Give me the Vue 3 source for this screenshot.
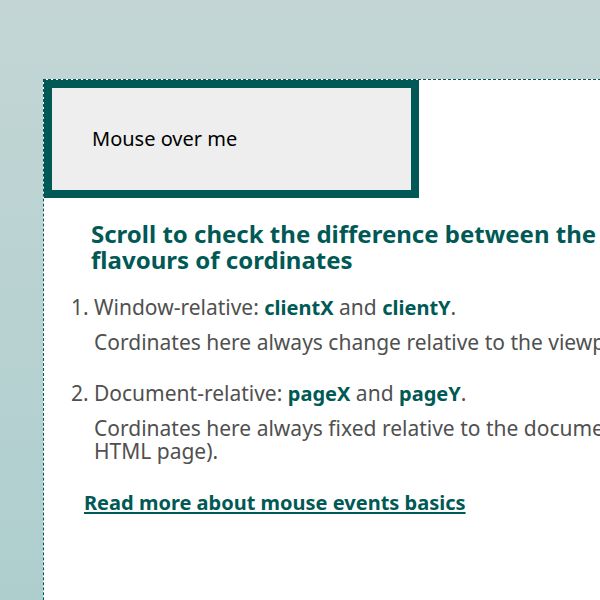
<script setup>
import { ref } from 'vue'

const label = ref('Mouse over me')

function showCoords(event) {
  label.value = `${event.clientX}:${event.clientY}`
}

function resetLabel() {
  label.value = 'Mouse over me'
}
</script>

<template>
  <div class="page">
    <main class="panel">
      <div class="tracker" @mousemove="showCoords" @mouseleave="resetLabel">{{ label }}</div>
      <h1 class="title">Scroll to check the difference between the two flavours of cordinates</h1>
      <ol class="flavours">
        <li>
          Window-relative: <strong>clientX</strong> and <strong>clientY</strong>.
          <p>Cordinates here always change relative to the viewport.</p>
        </li>
        <li>
          Document-relative: <strong>pageX</strong> and <strong>pageY</strong>.
          <p>Cordinates here always fixed relative to the document (the HTML&nbsp;page).</p>
        </li>
      </ol>
      <a class="more" href="#basics">Read more about mouse events basics</a>
    </main>
  </div>
</template>

<style>
body {
  margin: 0;
}
</style>

<style scoped>
.page {
  box-sizing: border-box;
  min-height: 100vh;
  padding: 79px 0 0 43px;
  overflow: hidden;
  display: flex;
  background: linear-gradient(#c3d6d5, #aecece) 0 0 / 100% 100vh;
  font-family: "Noto Sans", sans-serif;
  font-size: 20px;
  line-height: 23px;
  color: #505050;
}

.panel {
  box-sizing: border-box;
  flex: 0 0 120%;
  padding-bottom: 160px;
  border: 1px dashed #005955;
  background: #fff;
}

.tracker {
  box-sizing: border-box;
  width: 375px;
  padding: 40px;
  border: 8px solid #005955;
  background: #eee;
  line-height: 22px;
  color: #000;
}

.title {
  max-width: 620px;
  margin: 23px 0 23px 47px;
  font-size: 24px;
  line-height: 26px;
  font-weight: 700;
  color: #005955;
}

.flavours {
  max-width: 620px;
  margin: 0 0 28px;
  padding-left: 50px;
  font-size: 21px;
}

.flavours li + li {
  margin-top: 28px;
}

.flavours p {
  margin: 12px 0 0;
}

strong,
.more {
  font-size: 20px;
  font-weight: 700;
  color: #005955;
}

.more {
  margin-left: 40px;
  text-decoration-thickness: 2px;
  text-underline-offset: 2px;
}
</style>
